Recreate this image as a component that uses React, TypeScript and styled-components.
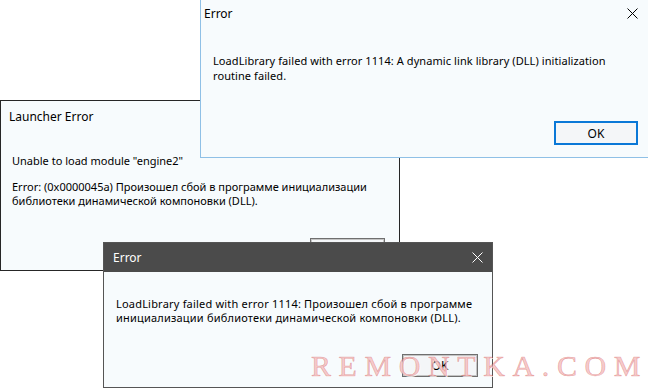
import React from "react";
import styled, { createGlobalStyle } from "styled-components";

const Global = createGlobalStyle`
  html, body { margin: 0; padding: 0; background: #ffffff; }
  body { width: 648px; height: 388px; overflow: hidden; }
`;

const Desktop = styled.div`
  position: relative;
  width: 648px;
  height: 388px;
  overflow: hidden;
  background: #ffffff;
  font-family: "Noto Sans", "Segoe UI", sans-serif;
  font-size: 11px;
  color: #000;
`;

const Win = styled.div<{ $x: number; $y: number; $w: number; $h: number; $border: string; $z: number }>`
  position: absolute;
  left: ${(p) => p.$x}px;
  top: ${(p) => p.$y}px;
  width: ${(p) => p.$w}px;
  height: ${(p) => p.$h}px;
  box-sizing: border-box;
  border: 1px solid ${(p) => p.$border};
  background: #f7fbfd;
  display: flex;
  flex-direction: column;
  z-index: ${(p) => p.$z};
`;

const TitleBar = styled.div<{ $h: number; $pad: number; $dark?: boolean }>`
  height: ${(p) => p.$h}px;
  flex: none;
  display: flex;
  align-items: center;
  padding-left: ${(p) => p.$pad}px;
  background: ${(p) => (p.$dark ? "#4b4b4b" : "transparent")};
  color: ${(p) => (p.$dark ? "#ffffff" : "#000000")};
  font-size: 12px;
`;

const TitleText = styled.span`
  flex: 1;
  white-space: nowrap;
`;

const CloseBtn = styled.div<{ $w: number }>`
  width: ${(p) => p.$w}px;
  height: 100%;
  display: flex;
  align-items: center;
  justify-content: center;
`;

const Body = styled.div<{ $top: number; $left: number }>`
  padding: ${(p) => p.$top}px 0 0 ${(p) => p.$left}px;
`;

const Para = styled.p<{ $lh: number; $gap?: number; $ls?: number }>`
  margin: ${(p) => p.$gap ?? 0}px 0 0 0;
  line-height: ${(p) => p.$lh}px;
  letter-spacing: ${(p) => p.$ls ?? 0}px;
  white-space: nowrap;
`;

const ButtonRow = styled.div<{ $right: number; $bottom: number }>`
  margin-top: auto;
  display: flex;
  justify-content: flex-end;
  padding: 0 ${(p) => p.$right}px ${(p) => p.$bottom}px 0;
`;

const Button = styled.div<{ $w: number; $h: number; $focused?: boolean }>`
  width: ${(p) => p.$w}px;
  height: ${(p) => p.$h}px;
  box-sizing: border-box;
  display: flex;
  align-items: center;
  justify-content: center;
  font-size: 12px;
  background: #f4f6f8;
  border: ${(p) => (p.$focused ? "2px solid #0a78d7" : "1px solid #6f6f6f")};
  box-shadow: ${(p) => (p.$focused ? "none" : "inset 0 0 0 1px #c4c4c4")};
`;

const Watermark = styled.div`
  position: absolute;
  left: 311px;
  top: 349px;
  z-index: 10;
  font-family: "Liberation Serif", "Times New Roman", serif;
  font-size: 30px;
  line-height: 34px;
  letter-spacing: 7.6px;
  white-space: nowrap;
  color: rgba(238, 150, 150, 0.5);
  -webkit-text-stroke: 0.6px rgba(200, 60, 60, 0.4);
  text-shadow: 1px 1px 0 rgba(255, 255, 255, 0.8);
  pointer-events: none;
`;

const CloseIcon = ({ color }: { color: string }) => (
  <svg width="11" height="11" viewBox="0 0 11 11">
    <path d="M0.5 0.5 L10.5 10.5 M10.5 0.5 L0.5 10.5" stroke={color} strokeWidth="1" fill="none" />
  </svg>
);

export default function App() {
  return (
    <Desktop>
      <Global />
      <Win $x={0} $y={100} $w={400} $h={171} $border="#262626" $z={1}>
        <TitleBar $h={30} $pad={8}>
          <TitleText>Launcher Error</TitleText>
        </TitleBar>
        <Body $top={22} $left={11}>
          <Para $lh={15}>Unable to load module "engine2"</Para>
          <Para $lh={14} $gap={12}>
            Error: (0x0000045a) Произошел сбой в программе инициализации
            <br />
            библиотеки динамической компоновки (DLL).
          </Para>
        </Body>
        <ButtonRow $right={14} $bottom={9}>
          <Button $w={75} $h={23}>OK</Button>
        </ButtonRow>
      </Win>

      <Win $x={200} $y={-2} $w={456} $h={160} $border="#8fc0e6" $z={2}>
        <TitleBar $h={29} $pad={3}>
          <TitleText>Error</TitleText>
          <CloseBtn $w={46}>
            <CloseIcon color="#000" />
          </CloseBtn>
        </TitleBar>
        <Body $top={25} $left={12}>
          <Para $lh={15} $ls={0.08}>
            LoadLibrary failed with error 1114: A dynamic link library (DLL) initialization
            <br />
            routine failed.
          </Para>
        </Body>
        <ButtonRow $right={17} $bottom={12}>
          <Button $w={84} $h={24} $focused>OK</Button>
        </ButtonRow>
      </Win>

      <Win $x={103} $y={242} $w={390} $h={146} $border="#555555" $z={3}>
        <TitleBar $h={29} $pad={9} $dark>
          <TitleText>Error</TitleText>
          <CloseBtn $w={30}>
            <CloseIcon color="#fff" />
          </CloseBtn>
        </TitleBar>
        <Body $top={25} $left={12}>
          <Para $lh={14} $ls={0.2}>
            LoadLibrary failed with error 1114: Произошел сбой в программе
            <br />
            инициализации библиотеки динамической компоновки (DLL).
          </Para>
        </Body>
        <ButtonRow $right={14} $bottom={10}>
          <Button $w={76} $h={23}>OK</Button>
        </ButtonRow>
      </Win>

      <Watermark>REMONTKA.COM</Watermark>
    </Desktop>
  );
}
